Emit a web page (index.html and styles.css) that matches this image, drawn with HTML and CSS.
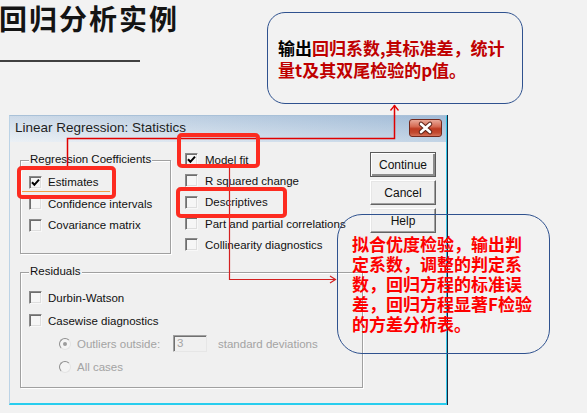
FILE: index.html
```html
<!DOCTYPE html>
<html lang="zh-CN">
<head>
<meta charset="utf-8">
<title>回归分析实例</title>
<link rel="stylesheet" href="styles.css">
</head>
<body>
<h1 class="title">回归分析实例</h1>
<div class="rule"></div>

<div class="dialog">
  <div class="titlebar">
    <span class="dlg-title">Linear Regression: Statistics</span>
    <span class="close">
      <svg width="33" height="18" viewBox="0 0 33 18">
        <path d="M12 5 L21 13 M21 5 L12 13" stroke="#5b2217" stroke-width="4.6" stroke-linecap="round" fill="none"/>
        <path d="M12 5 L21 13 M21 5 L12 13" stroke="#ffffff" stroke-width="2.6" stroke-linecap="round" fill="none"/>
      </svg>
    </span>
  </div>
  <div class="dlg-body">
    <div class="top">
      <div class="group coef">
        <span class="legend">Regression Coefficients</span>
        <div class="row"><span class="cb"><svg width="11" height="11" viewBox="0 0 11 11"><path d="M2 5.2 L4.4 7.8 L9 2.6" stroke="#000" stroke-width="2" fill="none"/></svg></span><span class="txt">Estimates</span></div>
        <div class="row"><span class="cb"></span><span class="txt">Confidence intervals</span></div>
        <div class="row"><span class="cb"></span><span class="txt">Covariance matrix</span></div>
      </div>
      <div class="rcol">
        <div class="row"><span class="cb"><svg width="11" height="11" viewBox="0 0 11 11"><path d="M2 5.2 L4.4 7.8 L9 2.6" stroke="#000" stroke-width="2" fill="none"/></svg></span><span class="txt">Model fit</span></div>
        <div class="row"><span class="cb"></span><span class="txt">R squared change</span></div>
        <div class="row"><span class="cb"></span><span class="txt">Descriptives</span></div>
        <div class="row"><span class="cb"></span><span class="txt">Part and partial correlations</span></div>
        <div class="row"><span class="cb"></span><span class="txt">Collinearity diagnostics</span></div>
      </div>
      <div class="btns">
        <div class="btn default">Continue</div>
        <div class="btn">Cancel</div>
        <div class="btn">Help</div>
      </div>
    </div>
    <div class="group resid">
      <span class="legend">Residuals</span>
      <div class="row"><span class="cb"></span><span class="txt">Durbin-Watson</span></div>
      <div class="row"><span class="cb"></span><span class="txt">Casewise diagnostics</span></div>
      <div class="row sub dis"><span class="radio on"></span><span class="txt lbl">Outliers outside:</span><span class="num">3</span><span class="txt sd">standard deviations</span></div>
      <div class="row sub dis"><span class="radio"></span><span class="txt">All cases</span></div>
    </div>
  </div>
</div>

<svg class="wires" width="587" height="413" viewBox="0 0 587 413">
  <line x1="22" y1="191.5" x2="110" y2="191.5" stroke="#f2a04a" stroke-width="1"/>
  <polyline points="67.5,166 67.5,138.5 394.5,138.5 394.5,105" stroke="#e00000" stroke-width="1.5" fill="none"/>
  <polyline points="390.5,110.5 394.5,105.5 398.5,110.5" stroke="#e00000" stroke-width="1.3" fill="none"/>
  <polyline points="229.5,167 229.5,279.5 335,279.5" stroke="#d42020" stroke-width="1.2" fill="none"/>
  <polyline points="330,276 335.5,279.5 330,283" stroke="#d42020" stroke-width="1.2" fill="none"/>
</svg>

<div class="callout c1"><span class="blk">输出</span>回归系数,其标准差，统计<br>量t及其双尾检验的p值。</div>
<div class="callout c2">拟合优度检验，输出判<br>定系数，调整的判定系<br>数，回归方程的标准误<br>差，回归方程显著F检验<br>的方差分析表。</div>

<div class="hl hl-est"></div>
<div class="hl hl-fit"></div>
<div class="hl hl-desc"></div>
</body>
</html>
```

FILE: styles.css
```css
html, body {
  margin: 0;
  padding: 0;
}
body {
  position: relative;
  width: 587px;
  height: 413px;
  overflow: hidden;
  background: #f2f2f2;
  font-family: "Liberation Sans", Arial, sans-serif;
}

.title {
  margin: 0;
  font-family: "Noto Sans CJK SC", sans-serif;
  font-weight: 700;
  font-size: 28px;
  line-height: 36px;
  letter-spacing: 2px;
  color: #141414;
  text-indent: -1px;
}
.rule {
  width: 140px;
  height: 2px;
  margin-top: 24px;
  background: #404040;
}

/* dialog window */
.dialog {
  box-sizing: border-box;
  width: 438px;
  height: 290px;
  margin: 53px 0 0 9px;
  background: #f0f0f0;
  border-top: 1px solid #a9c1d8;
  border-left: 1px solid #bcd3e6;
  border-right: 1px solid #35c6e8;
  border-bottom: 2px solid #29cdee;
  box-shadow: 1px 0 0 #16263c;
}
.titlebar {
  display: flex;
  justify-content: space-between;
  align-items: flex-start;
  height: 26px;
  padding: 0 4px 0 5px;
  background:
    linear-gradient(to bottom, rgba(140, 170, 205, 0.25), rgba(255, 255, 255, 0.3)),
    linear-gradient(to right, #e3eaf1 0%, #cddbe9 40%, #a8c1da 100%);
}
.dlg-title {
  font-size: 13.5px;
  line-height: 24px;
  color: #1e1e1e;
}
.close {
  display: block;
  width: 33px;
  height: 18px;
  margin-top: 3px;
  box-sizing: border-box;
  border: 1px solid #73281c;
  border-radius: 3px;
  background: linear-gradient(to bottom, #e9a898 0%, #d66c55 40%, #bd3b22 55%, #c24a30 80%, #d5735a 100%);
}
.close svg {
  display: block;
  margin: -1px 0 0 -1px;
}

.dlg-body {
  padding: 0 10px 0 10px;
  font-size: 11.5px;
  color: #111;
}
.top {
  display: flex;
  height: 112px;
}

.group {
  position: relative;
  box-sizing: border-box;
  border: 1px solid #a0a0a0;
  box-shadow: inset 1px 1px #ffffff, 1px 1px #ffffff;
  padding-left: 8px;
}
.legend {
  position: absolute;
  left: 8px;
  top: -9px;
  padding: 0 1px;
  line-height: 15px;
  background: #f0f0f0;
  white-space: nowrap;
}
.coef {
  width: 151px;
  height: 94px;
  margin-top: 18px;
  padding-top: 10.5px;
}
.coef .row { height: 21.5px; }

.rcol {
  margin-left: 14px;
  margin-top: 7px;
}
.rcol .row { height: 21.3px; }
.rcol .cb { margin-right: 7px; }

.row {
  display: flex;
  align-items: center;
  white-space: nowrap;
}
.txt { line-height: 14px; }

.cb {
  display: block;
  flex: none;
  box-sizing: border-box;
  width: 13px;
  height: 13px;
  margin-right: 6px;
  border: 1px solid;
  border-color: #8a8a8a #f8f8f8 #f8f8f8 #8a8a8a;
  box-shadow: inset 1px 1px #6e6e6e, inset -1px -1px #dedede;
  background: #f6f6f6;
}
.cb svg { display: block; }

.btns {
  margin-left: auto;
  margin-top: 10px;
  display: flex;
  flex-direction: column;
  gap: 3px;
}
.btn {
  box-sizing: border-box;
  width: 66px;
  height: 25px;
  display: flex;
  align-items: center;
  justify-content: center;
  font-size: 12px;
  color: #111;
  background: #f0f0f0;
  border: 1px solid;
  border-color: #ffffff #646464 #646464 #ffffff;
  box-shadow: inset -1px -1px #a0a0a0, inset 1px 1px #e6e6e6;
}
.btn.default {
  border: 1px solid #5a5a5a;
  box-shadow: inset 1px 1px #ffffff, inset -2px -2px #8c8c8c;
}

.resid {
  width: 343px;
  height: 116px;
  margin-top: 18px;
  padding-top: 13px;
}
.resid .row { height: 23px; }

.sub { padding-left: 30px; }
.dis { color: #a3a3a3; }
.radio {
  display: block;
  flex: none;
  position: relative;
  box-sizing: border-box;
  width: 12px;
  height: 12px;
  margin-right: 6px;
  border-radius: 50%;
  border: 1px solid;
  border-color: #8e8e8e #e4e4e4 #e4e4e4 #8e8e8e;
  background: #f4f4f4;
}
.radio.on::after {
  content: "";
  position: absolute;
  left: 3px;
  top: 3px;
  width: 4px;
  height: 4px;
  border-radius: 50%;
  background: #9c9c9c;
}
.lbl { width: 96px; }
.num {
  box-sizing: border-box;
  width: 34px;
  height: 17px;
  padding-left: 3px;
  line-height: 14px;
  border: 1px solid;
  border-color: #a0a0a0 #e6e6e6 #e6e6e6 #a0a0a0;
  box-shadow: inset 1px 1px #707070;
  background: #f0f0f0;
}
.sd { margin-left: 11px; }

/* annotations */
.wires {
  position: absolute;
  left: 0;
  top: 0;
}
.callout {
  position: absolute;
  box-sizing: border-box;
  border: 1.3px solid #2f528f;
  font-family: "Noto Sans CJK SC", sans-serif;
  font-weight: 700;
  font-size: 17px;
  white-space: nowrap;
}
.c1 {
  left: 267px;
  top: 12px;
  width: 256px;
  height: 92px;
  border-radius: 18px;
  padding: 24px 0 0 10px;
  line-height: 22px;
  color: #c00000;
}
.c1 .blk { color: #000; }
.c2 {
  left: 337px;
  top: 214px;
  width: 213px;
  height: 140px;
  border-radius: 25px;
  padding: 19px 0 0 14px;
  line-height: 20px;
  color: #fe0000;
}

.hl {
  position: absolute;
  box-sizing: border-box;
  border: 4px solid #fd2b20;
  border-radius: 5px;
  box-shadow: 0 0 0.5px #b01000;
}
.hl-est { left: 17px; top: 166px; width: 99px; height: 33px; }
.hl-fit { left: 177px; top: 133px; width: 83px; height: 35px; }
.hl-desc { left: 176px; top: 187px; width: 111px; height: 31px; }
```
